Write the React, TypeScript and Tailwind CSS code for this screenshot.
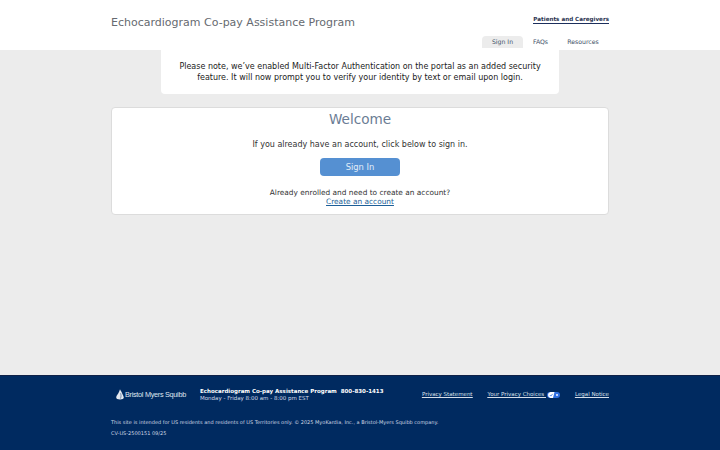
export default function App() {
  return (
    <div className="flex h-[450px] w-[720px] flex-col overflow-hidden bg-[#ececec] font-['DejaVu_Sans',sans-serif] text-[#333]">
      <header className="h-[50px] bg-white">
        <div className="mx-auto flex h-full w-[498px] items-start justify-between">
          <h1 className="mt-[15px] text-[11px] font-normal leading-4 text-[#666a70]">Echocardiogram Co-pay Assistance Program</h1>
          <div className="flex flex-col items-end">
            <a className="mt-[15px] border-b border-[#1c2f5c] text-[5.6px] font-bold leading-[8px] text-[#2a3350]">Patients and Caregivers</a>
            <nav className="mt-[12px] flex h-[12px] items-center text-[6.2px] text-[#3e4f66]">
              <span className="flex h-[12px] w-[41px] items-center justify-center rounded-t-sm bg-[#ececec]">Sign In</span>
              <span className="flex w-[35px] justify-center">FAQs</span>
              <span className="flex w-[51px] justify-center pr-[1px]">Resources</span>
            </nav>
          </div>
        </div>
      </header>

      <main className="flex flex-1 flex-col items-center">
        <div className="flex h-[44px] w-[398px] items-start justify-center rounded-b-sm bg-white pt-[12px] text-center text-[8px] leading-[10.5px] text-[#222]">
          <p className="w-[370px]">Please note, we’ve enabled Multi-Factor Authentication on the portal as an added security feature. It will now prompt you to verify your identity by text or email upon login.</p>
        </div>
        <section className="mt-[13px] flex h-[108px] w-[498px] flex-col items-center rounded-[4px] border border-[#dcdcdc] bg-white text-center">
          <h2 className="mt-[1px] text-[13.6px] font-normal leading-[20px] text-[#6a7c94]">Welcome</h2>
          <p className="mt-[10px] text-[8px] leading-[12px] text-[#333]">If you already have an account, click below to sign in.</p>
          <button className="mt-[7px] h-[18px] w-[80px] rounded-sm bg-[#5590d2] text-[8.4px] leading-[18px] text-[#e2edf8]">Sign In</button>
          <p className="mt-[12px] text-[7.4px] leading-[9px] text-[#333]">Already enrolled and need to create an account?</p>
          <a className="text-[7.4px] leading-[9px] text-[#1d5f98] underline">Create an account</a>
        </section>
      </main>

      <footer className="h-[75px] border-t border-[#0f2147] bg-[#002a60] text-white">
        <div className="mx-auto w-[498px]">
          <div className="flex h-[37px] items-center">
            <div className="ml-[5px] flex w-[84px] items-center gap-[1px]">
              <svg width="8" height="11" viewBox="0 0 8 11" className="shrink-0">
                <path d="M4 0.3 C4.4 1.6 5.6 2.4 6 4 C6.4 5.6 7.6 6.6 7.8 8.4 C7.9 9.6 6.4 10.4 4 10.4 C1.6 10.4 0.1 9.6 0.2 8.4 C0.4 6.6 1.6 5.8 2.2 4.6 C2.8 3.4 3.6 2 4 0.3 Z" fill="#e4e9f0" />
                <path d="M4.6 4.2 C5 6 5.4 7.4 4.4 9.6" fill="none" stroke="#002a60" strokeWidth="0.5" />
              </svg>
              <span className="font-['Liberation_Sans',sans-serif] text-[7.3px] leading-none tracking-[-0.3px] text-[#dfe5ee]">Bristol Myers Squibb</span>
            </div>
            <div className="text-[5.5px] leading-[6.5px]">
              <p className="font-bold">Echocardiogram Co-pay Assistance Program&nbsp; 800-830-1413</p>
              <p className="text-[#d4dce8]">Monday - Friday 8:00 am - 8:00 pm EST</p>
            </div>
            <nav className="ml-auto flex items-center text-[5.5px] text-[#d8e0ea] underline">
              <a className="mr-[15px]">Privacy Statement</a>
              <a className="mr-[1px]">Your Privacy Choices&nbsp;</a>
              <svg width="13" height="6" viewBox="0 0 13 6" className="mr-[15px]">
                <rect width="13" height="6" rx="3" fill="#2f6fe0" />
                <path d="M1 3 A3 3 0 0 1 3.5 0 H7.5 L6 6 H3.5 A3 3 0 0 1 1 3 Z" fill="#fff" />
                <path d="M2.8 3 L3.9 4.1 L5.6 1.9" fill="none" stroke="#2f6fe0" strokeWidth="0.8" />
                <path d="M9 2 L11 4 M11 2 L9 4" stroke="#fff" strokeWidth="0.7" />
              </svg>
              <a>Legal Notice</a>
            </nav>
          </div>
          <p className="mt-[6px] text-[5px] leading-[6px] text-[#cfd8e4]">This site is intended for US residents and residents of US Territories only. © 2025 MyoKardia, Inc., a Bristol-Myers Squibb company.</p>
          <p className="mt-[5px] text-[5px] leading-[6px] text-[#cfd8e4]">CV-US-2500151 09/25</p>
        </div>
      </footer>
    </div>
  );
}
